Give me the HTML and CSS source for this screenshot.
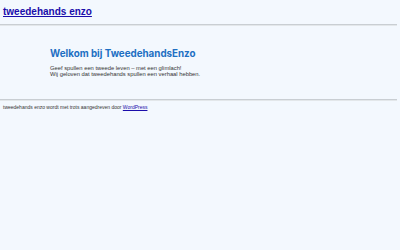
FILE: index.html
```html
<!DOCTYPE html>
<html lang="nl">

<head>
    <meta charset="UTF-8">
    <meta name="viewport" content="width=device-width, initial-scale=1.0">
    <title>tweedehands enzo</title>
    <link rel="stylesheet" href="styles.css">
</head>

<body>
    <header class="site-header">
        <h1 class="site-title"><a href="#">tweedehands enzo</a></h1>
    </header>
    <hr class="line">

    <main class="content">
        <h2 class="welcome">Welkom bij TweedehandsEnzo</h2>
        <p class="intro">Geef spullen een tweede leven – met een glimlach!<br>
            Wij geloven dat tweedehands spullen een verhaal hebben.</p>
    </main>

    <hr class="line">
    <footer class="site-footer">
        <p>tweedehands enzo wordt met trots aangedreven door <a href="#">WordPress</a></p>
    </footer>
</body>

</html>
```

FILE: styles.css
```css
*,
::before,
::after {
    box-sizing: border-box;
    margin: 0;
    padding: 0;
}

body {
    background: #f3f8fe;
    font-family: "Liberation Sans", Arial, sans-serif;
    color: #333;
    padding-right: 3px;
}

.site-header {
    padding: 6px 3px 7px;
}

.site-title {
    font-size: 10px;
    line-height: 11px;
}

.site-title a {
    color: #1a0dab;
}

.line {
    border: 0;
    border-top: 1px solid #c9ced3;
    border-bottom: 1px solid #e3e7ea;
}

.content {
    padding: 22px 50px 21px;
}

.welcome {
    font-family: Inter, "Liberation Sans", sans-serif;
    font-size: 9.8px;
    line-height: 12px;
    color: #1e6fc3;
    margin-bottom: 5px;
}

.intro {
    font-size: 5.8px;
    line-height: 6.3px;
}

.site-footer {
    padding: 3px 3px;
    font-size: 5px;
    line-height: 6px;
}

.site-footer a {
    color: #1a0dab;
}
```
